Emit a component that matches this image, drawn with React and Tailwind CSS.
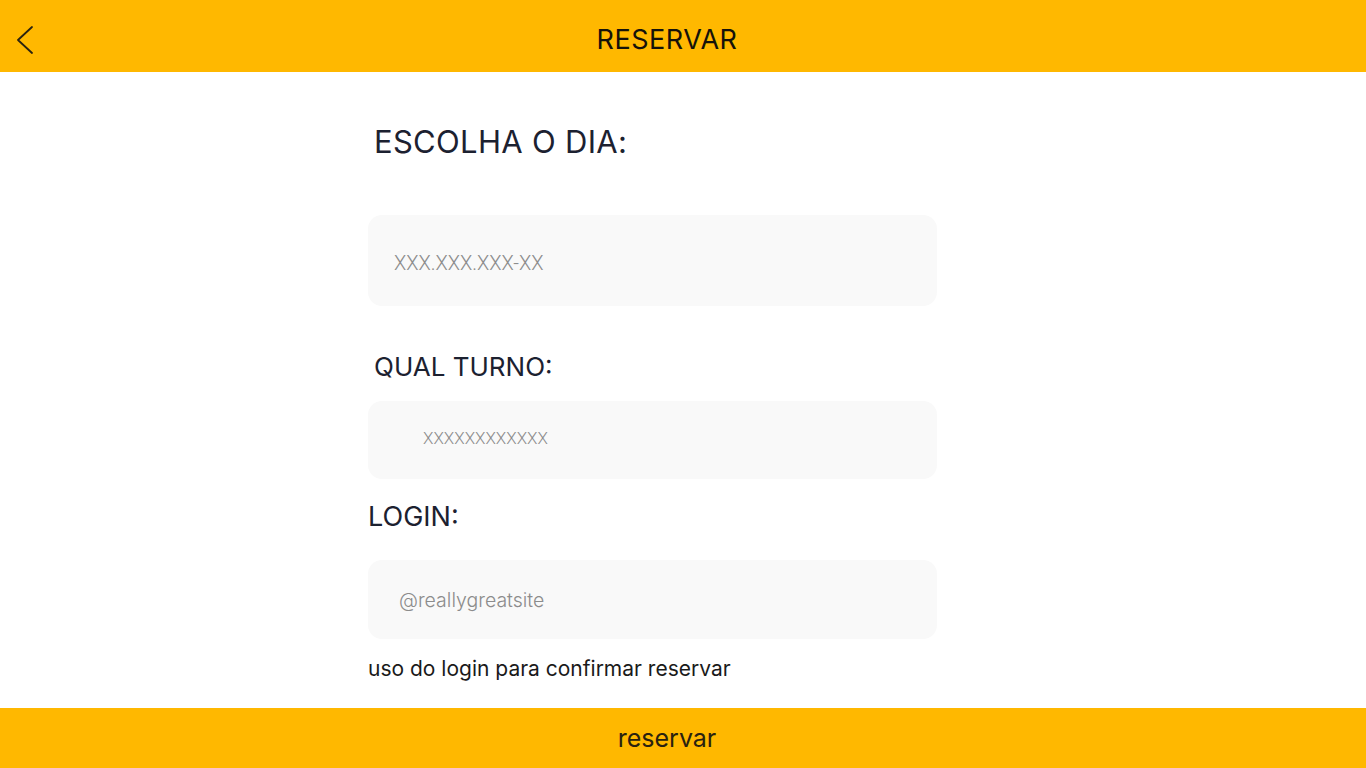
import React from "react";

function Field({ placeholder, className, textClass }) {
  return (
    <div className={`w-[569px] rounded-[14px] bg-[#f9f9f9] flex items-center ${className}`}>
      <span className={textClass}>{placeholder}</span>
    </div>
  );
}

export default function App() {
  return (
    <div className="min-h-screen flex flex-col bg-white font-['Inter',sans-serif]">
      {/* Header */}
      <header className="relative h-[72px] bg-[#ffb800] flex items-center justify-center pr-[32px]">
        <button className="absolute left-[14px] top-[26px] text-[#2a2210]">
          <svg width="22" height="28" viewBox="0 0 22 28" fill="none">
            <polyline points="18,1 4,14 18,27" stroke="currentColor" strokeWidth="1.8" strokeLinecap="round" strokeLinejoin="round" />
          </svg>
        </button>
        <h1 className="mt-[8px] text-[27px] text-[#15120a] tracking-[0.5px]">RESERVAR</h1>
      </header>

      {/* Form */}
      <main className="flex-1 flex flex-col pl-[368px] pt-[50px] text-[#1c2130]">
        <h2 className="ml-[6px] text-[31px] leading-[40px] tracking-[0.3px]">ESCOLHA O DIA:</h2>
        <Field
          placeholder="XXX.XXX.XXX-XX"
          className="mt-[53px] h-[91px] pl-[26px] pt-[4px]"
          textClass="font-['Roboto',sans-serif] font-light text-[20px] text-[#8c8c8c]"
        />

        <h2 className="ml-[6px] mt-[43px] text-[26px] leading-[36px]">QUAL TURNO:</h2>
        <Field
          placeholder="XXXXXXXXXXXX"
          className="mt-[16px] h-[78px] pl-[55px]"
          textClass="font-['Roboto',sans-serif] font-light text-[17px] text-[#8c8c8c] -mt-[3px]"
        />

        <h2 className="mt-[20px] text-[27px] leading-[36px]">LOGIN:</h2>
        <Field
          placeholder="@reallygreatsite"
          className="mt-[25px] h-[79px] pl-[31px] pt-[3px]"
          textClass="font-light text-[19.5px] text-[#8c8c8c]"
        />

        <p className="mt-[16px] text-[21px] leading-[28px] text-[#1a1a1a]">
          uso do login para confirmar reservar
        </p>
      </main>

      {/* Footer button */}
      <button className="h-[60px] bg-[#ffb800] flex items-center justify-center pr-[32px] pt-[2px] text-[25px] text-[#2a2210]">
        reservar
      </button>
    </div>
  );
}
